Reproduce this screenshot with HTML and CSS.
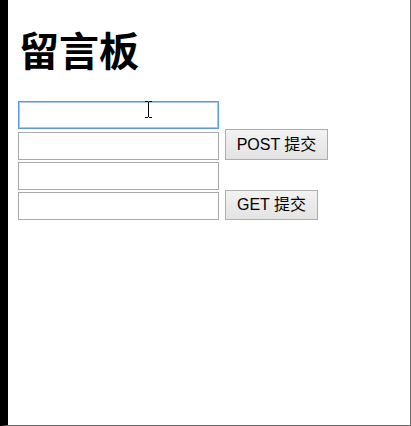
FILE: index.html
```html
<!DOCTYPE html>
<html lang="zh">
<head>
<meta charset="utf-8">
<title>留言板</title>
<link rel="stylesheet" href="styles.css">
</head>
<body>
<div class="frame">
  <h1 class="title">留言板</h1>
  <form class="board post" method="post">
    <div class="row r1">
      <input class="field focused" type="text">
    </div>
    <div class="row r2">
      <input class="field" type="text">
      <button class="btn b-post" type="submit">POST 提交</button>
    </div>
  </form>
  <form class="board get" method="get">
    <div class="row r3">
      <input class="field" type="text">
    </div>
    <div class="row r4">
      <input class="field" type="text">
      <button class="btn b-get" type="submit">GET 提交</button>
    </div>
  </form>
  <svg class="cursor" width="8" height="17" viewBox="0 0 8 17">
    <path d="M0 0.5h3M4 0.5h3M3.5 1v15M0 16.5h3M4 16.5h3" stroke="#000" stroke-width="1" fill="none"/>
  </svg>
</div>
</body>
</html>
```

FILE: styles.css
```css
html, body {
  margin: 0;
  padding: 0;
  background: #fff;
}
.frame {
  position: relative;
  box-sizing: border-box;
  width: 411px;
  height: 426px;
  border-left: 8px solid #000;
  border-right: 1px solid #6b6b6b;
  border-bottom: 1px solid #6b6b6b;
  padding: 0 0 0 10px;
  font-family: "Liberation Sans", "Noto Sans CJK SC", sans-serif;
  font-size: 16px;
  color: #000;
}
.title {
  margin: 0;
  padding-top: 24px;
  font-family: "Noto Sans CJK SC", sans-serif;
  font-weight: 700;
  font-size: 40px;
  line-height: 50px;
  height: 77px;
  padding-left: 1px;
}
.board {
  margin: 0;
  display: flex;
  flex-direction: column;
}
.row {
  display: flex;
  align-items: flex-end;
  gap: 6px;
}
.r1 { margin-top: 0; }
.r3 { margin-top: 2px; }
.field {
  box-sizing: border-box;
  width: 201px;
  height: 28px;
  margin: 0;
  padding: 0 4px;
  border: 1px solid #a9a9a9;
  background: #fff;
  outline: none;
  font: inherit;
}
.field.focused {
  border-color: #5b97ea;
  box-shadow: inset 0 0 0 1px #a7c8f3;
}
.btn {
  box-sizing: border-box;
  margin: 0;
  padding: 0 8px;
  border: 1px solid #adadad;
  border-radius: 0;
  background: linear-gradient(#f2f2f2, #e3e3e3);
  font-family: "Liberation Sans", "Noto Sans CJK SC", sans-serif;
  font-size: 16px;
  color: #000;
  line-height: 1;
}
.b-post { width: 103px; height: 31px; }
.b-get { width: 93px; height: 30px; }
.cursor {
  position: absolute;
  left: 137px;
  top: 101px;
}
```
